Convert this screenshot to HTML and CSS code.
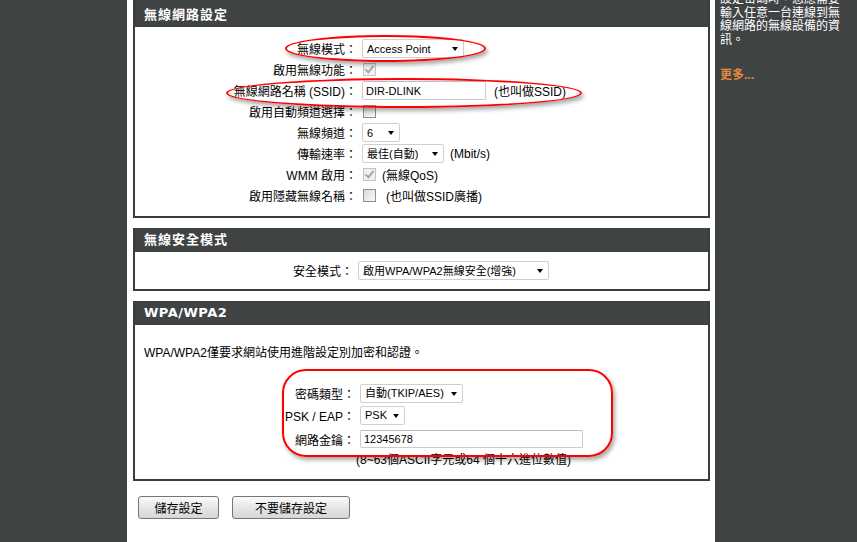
FILE: index.html
```html
<!DOCTYPE html>
<html lang="zh-Hant">
<head>
    <meta charset="UTF-8">
    <title>無線網路設定</title>
    <link rel="stylesheet" href="styles.css">
</head>
<body>
    <div class="page">
        <aside class="side-left"></aside>

        <main class="main">
            <!-- 無線網路設定 -->
            <section class="box box-wireless">
                <h2 class="box-head box-head-first">無線網路設定</h2>
                <div class="box-body">
                    <div class="row">
                        <label>無線模式：</label>
                        <div class="field">
                            <span class="select w-mode"><select><option>Access Point</option></select></span>
                        </div>
                    </div>
                    <div class="row">
                        <label>啟用無線功能：</label>
                        <div class="field"><input type="checkbox" class="check" checked disabled></div>
                    </div>
                    <div class="row">
                        <label>無線網路名稱 (SSID)：</label>
                        <div class="field">
                            <input type="text" class="text w-ssid" value="DIR-DLINK">
                            <span class="hint hint-ssid">(也叫做SSID)</span>
                        </div>
                    </div>
                    <div class="row">
                        <label>啟用自動頻道選擇：</label>
                        <div class="field"><input type="checkbox" class="check"></div>
                    </div>
                    <div class="row">
                        <label>無線頻道：</label>
                        <div class="field">
                            <span class="select w-channel"><select><option>6</option></select></span>
                        </div>
                    </div>
                    <div class="row">
                        <label>傳輸速率：</label>
                        <div class="field">
                            <span class="select w-rate"><select><option>最佳(自動)</option></select></span>
                            <span class="hint">(Mbit/s)</span>
                        </div>
                    </div>
                    <div class="row">
                        <label>WMM 啟用：</label>
                        <div class="field">
                            <input type="checkbox" class="check" checked disabled>
                            <span class="hint">(無線QoS)</span>
                        </div>
                    </div>
                    <div class="row">
                        <label>啟用隱藏無線名稱：</label>
                        <div class="field">
                            <input type="checkbox" class="check">
                            <span class="hint hint-wide">(也叫做SSID廣播)</span>
                        </div>
                    </div>
                </div>
            </section>

            <!-- 無線安全模式 -->
            <section class="box box-security">
                <h2 class="box-head">無線安全模式</h2>
                <div class="box-body">
                    <div class="row">
                        <label>安全模式：</label>
                        <div class="field">
                            <span class="select w-security"><select><option>啟用WPA/WPA2無線安全(增強)</option></select></span>
                        </div>
                    </div>
                </div>
            </section>

            <!-- WPA/WPA2 -->
            <section class="box box-wpa">
                <h2 class="box-head box-head-latin">WPA/WPA2</h2>
                <div class="box-body">
                    <p class="desc">WPA/WPA2僅要求網站使用進階設定別加密和認證。</p>
                    <div class="row">
                        <label>密碼類型：</label>
                        <div class="field">
                            <span class="select w-cipher"><select><option>自動(TKIP/AES)</option></select></span>
                        </div>
                    </div>
                    <div class="row">
                        <label>PSK / EAP：</label>
                        <div class="field">
                            <span class="select w-psk"><select><option>PSK</option></select></span>
                        </div>
                    </div>
                    <div class="row row-tall">
                        <label>網路金鑰：</label>
                        <div class="field"><input type="text" class="text w-key" value="12345678"></div>
                    </div>
                    <p class="note">(8~63個ASCII字元或64 個十六進位數值)</p>
                </div>
            </section>

            <div class="actions">
                <button class="btn btn-save">儲存設定</button>
                <button class="btn btn-cancel">不要儲存設定</button>
            </div>
        </main>

        <aside class="side-right">
            <p class="help">設定密碼時，您應需要輸入任意一台連線到無線網路的無線設備的資訊。</p>
            <a class="more" href="#">更多...</a>
        </aside>

        <!-- 標註 -->
        <span class="mark mark-mode"></span>
        <span class="mark mark-ssid"></span>
        <span class="mark mark-wpa"></span>
    </div>
</body>
</html>
```

FILE: styles.css
```css
html, body {
    margin: 0;
    padding: 0;
}

body {
    font: 12px "Liberation Sans", "Noto Sans CJK TC", sans-serif;
    color: #000;
    background: #404344;
}

.page {
    --dark: #404344;
    position: relative;
    display: flex;
    min-height: 542px;
    overflow: hidden;
}

.side-left {
    width: 127px;
    flex-shrink: 0;
    background: var(--dark);
}

.main {
    width: 588px;
    flex-shrink: 0;
    box-sizing: border-box;
    padding: 0 5px 0 6px;
    background: #fff;
}

.side-right {
    width: 142px;
    flex-shrink: 0;
    box-sizing: border-box;
    padding: 0 12px 0 5px;
    background: var(--dark);
    color: #fff;
}

/* boxes */

.box {
    border: 2px solid #3a3c3d;
    border-top-width: 0;
    margin-bottom: 10px;
}

.box-head {
    margin: 0;
    height: 24px;
    box-sizing: border-box;
    padding-left: 9px;
    background: var(--dark);
    color: #fff;
    font-size: 13px;
    font-weight: bold;
    letter-spacing: 1px;
    line-height: 24px;
}

.box-head-first {
    height: 27px;
    line-height: 29px;
}

.box-head-latin {
    font-family: "DejaVu Sans", sans-serif;
    letter-spacing: 0.5px;
}

.box-body {
    --label-w: 222px;
}

.box-wireless .box-body {
    padding: 11px 0 10px;
}

.box-security .box-body {
    --label-w: 218px;
    padding: 8px 0;
}

.box-wpa .box-body {
    --label-w: 220px;
    padding: 20px 0 11px;
}

.row {
    display: grid;
    grid-template-columns: var(--label-w) 1fr;
    column-gap: 5px;
    align-items: center;
    height: 21px;
}

.box-wpa .row {
    height: 22px;
}

.box-wpa .row-tall {
    height: 26px;
}

.row > label {
    text-align: right;
    white-space: nowrap;
}

.field {
    display: flex;
    align-items: center;
    gap: 6px;
}

.hint-ssid {
    margin-left: 2px;
}

.hint-wide {
    margin-left: 4px;
}

.desc {
    margin: 0 0 21px 9px;
    line-height: 16px;
}

.note {
    margin: 0;
    padding-left: 221px;
    line-height: 16px;
}

/* form controls */

.select {
    position: relative;
    display: inline-block;
}

.select select {
    appearance: none;
    width: 100%;
    height: 19px;
    box-sizing: border-box;
    margin: 0;
    padding: 0 16px 0 4px;
    border: 1px solid #cfcfcf;
    border-radius: 2px;
    background: #fff;
    color: #000;
    font: 11px "Liberation Sans", "Noto Sans CJK TC", sans-serif;
}

.select::after {
    content: "";
    position: absolute;
    right: 6px;
    top: 8px;
    border-left: 3.5px solid transparent;
    border-right: 3.5px solid transparent;
    border-top: 4px solid #000;
    pointer-events: none;
}

.w-mode { width: 102px; }
.w-channel { width: 38px; }
.w-rate { width: 82px; }
.w-security { width: 191px; }
.w-cipher { width: 103px; }
.w-psk { width: 45px; }

.text {
    height: 19px;
    box-sizing: border-box;
    margin: 0;
    padding: 0 3px;
    border: 1px solid #cccccc;
    border-top-color: #bdbdbd;
    border-radius: 2px;
    font: 11px "Liberation Sans", "Noto Sans CJK TC", sans-serif;
    color: #000;
}

.w-ssid { width: 124px; }
.w-key { width: 223px; height: 18px; }

.check {
    appearance: none;
    position: relative;
    width: 13px;
    height: 13px;
    margin: 0 0 0 1px;
    border: 1px solid #8e8f8f;
    background: linear-gradient(135deg, #d8d8d8, #fafafa);
}

.check:disabled {
    border-color: #c4c4c4;
    background: #f1f1f1;
}

.check:checked::after {
    content: "";
    position: absolute;
    left: 3px;
    top: 0px;
    width: 3px;
    height: 7px;
    border-right: 2px solid #a8a8a8;
    border-bottom: 2px solid #a8a8a8;
    transform: rotate(40deg);
}

/* buttons */

.actions {
    display: flex;
    gap: 13px;
    padding: 5px 0 0 5px;
}

.btn {
    height: 23px;
    margin: 0;
    border: 1px solid #767676;
    border-radius: 3px;
    background: linear-gradient(#fbfbfb, #e6e6e6 50%, #d6d6d6);
    font: 12px "Liberation Sans", "Noto Sans CJK TC", sans-serif;
    color: #000;
}

.btn-save { width: 81px; }
.btn-cancel { width: 118px; }

/* help sidebar */

.help {
    margin: -7px 0 0;
    line-height: 13.5px;
}

.more {
    display: block;
    margin-top: 21px;
    color: #e4873e;
    font-weight: bold;
    text-decoration: none;
    line-height: 14px;
}

/* red annotations drawn over the screenshot */

.mark {
    position: absolute;
    box-sizing: border-box;
    border: 2px solid #f00;
    box-shadow: 2px 3px 4px rgba(0, 0, 0, 0.35);
    pointer-events: none;
}

.mark-mode {
    left: 285px;
    top: 35px;
    width: 201px;
    height: 27px;
    border-radius: 50%;
}

.mark-ssid {
    left: 226px;
    top: 78px;
    width: 356px;
    height: 30px;
    border-radius: 50%;
}

.mark-wpa {
    left: 282px;
    top: 369px;
    width: 331px;
    height: 88px;
    border-radius: 24px;
}
```
